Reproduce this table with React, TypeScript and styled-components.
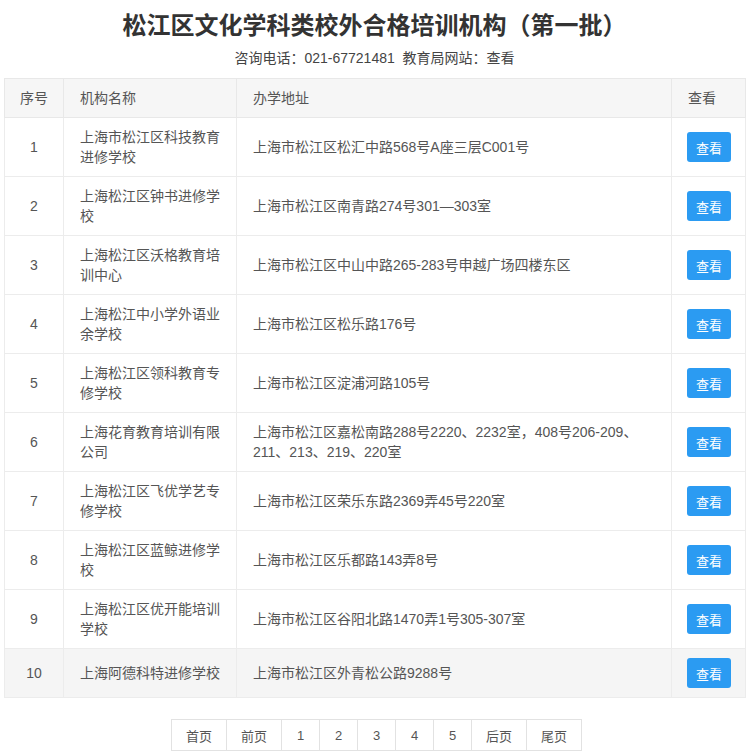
import React from "react";
import styled, { createGlobalStyle } from "styled-components";

const GlobalStyle = createGlobalStyle`
  html, body { margin: 0; padding: 0; background: #fff; }
  body { font-family: "Liberation Sans", "Noto Sans CJK SC", sans-serif; color: #555; }
`;

const Page = styled.div`
  padding: 8px 9px 0 4px;
  display: flex;
  flex-direction: column;
  align-items: stretch;
`;

const Title = styled.h1`
  margin: 0;
  font-size: 24px;
  line-height: 32px;
  font-weight: 700;
  color: #333;
  text-align: center;
  font-family: "Noto Sans CJK SC", sans-serif;
`;

const Subtitle = styled.div`
  margin-top: 8px;
  font-size: 14px;
  line-height: 20px;
  color: #444;
  text-align: center;
`;

const Table = styled.table`
  margin-top: 10px;
  width: 741px;
  table-layout: fixed;
  border-collapse: collapse;
  border: 1px solid #e6e6e6;
  font-size: 14px;
  line-height: 20px;
`;

const HeadCell = styled.th<{ $center?: boolean }>`
  background: #f6f6f6;
  font-weight: 400;
  color: #555;
  text-align: ${(p) => (p.$center ? "center" : "left")};
  padding: ${(p) => (p.$center ? "9px 0" : "9px 15px 9px 16px")};
  border: 1px solid #e8e8e8;
  height: 20px;
  white-space: nowrap;
`;

const Row = styled.tr<{ $shade?: boolean }>`
  background: ${(p) => (p.$shade ? "#f5f5f5" : "#fff")};
`;

const Cell = styled.td<{ $center?: boolean }>`
  text-align: ${(p) => (p.$center ? "center" : "left")};
  vertical-align: middle;
  padding: ${(p) => (p.$center ? "9px 0" : "9px 15px 9px 16px")};
  border: 1px solid #ececec;
  color: #555;
`;

const ViewButton = styled.button`
  width: 44px;
  height: 30px;
  border: none;
  border-radius: 3px;
  background: #2b9bf2;
  color: #fff;
  font-size: 13px;
  font-family: "Noto Sans CJK SC", sans-serif;
  padding: 0;
  margin-left: -1px;
  display: block;
`;

const Pager = styled.div`
  margin-top: 21px;
  align-self: center;
  display: flex;
  border: 1px solid #e2e2e2;
  margin-left: 4px;
`;

const PageItem = styled.div<{ $wide?: boolean }>`
  width: ${(p) => (p.$wide ? "54px" : "37px")};
  height: 30px;
  display: flex;
  align-items: center;
  justify-content: center;
  font-size: 13px;
  color: #555;
  & + & { border-left: 1px solid #e2e2e2; }
`;

const rows: [string, string][] = [
  ["上海市松江区科技教育进修学校", "上海市松江区松汇中路568号A座三层C001号"],
  ["上海松江区钟书进修学校", "上海市松江区南青路274号301—303室"],
  ["上海松江区沃格教育培训中心", "上海市松江区中山中路265-283号申越广场四楼东区"],
  ["上海松江中小学外语业余学校", "上海市松江区松乐路176号"],
  ["上海松江区领科教育专修学校", "上海市松江区淀浦河路105号"],
  ["上海花育教育培训有限公司", "上海市松江区嘉松南路288号2220、2232室，408号206-209、211、213、219、220室"],
  ["上海松江区飞优学艺专修学校", "上海市松江区荣乐东路2369弄45号220室"],
  ["上海松江区蓝鲸进修学校", "上海市松江区乐都路143弄8号"],
  ["上海松江区优开能培训学校", "上海市松江区谷阳北路1470弄1号305-307室"],
  ["上海阿德科特进修学校", "上海市松江区外青松公路9288号"],
];

const pages: [string, boolean][] = [
  ["首页", true],
  ["前页", true],
  ["1", false],
  ["2", false],
  ["3", false],
  ["4", false],
  ["5", false],
  ["后页", true],
  ["尾页", true],
];

export default function App() {
  return (
    <>
      <GlobalStyle />
      <Page>
        <Title>松江区文化学科类校外合格培训机构（第一批）</Title>
        <Subtitle>咨询电话：021-67721481&nbsp;&nbsp;教育局网站：查看</Subtitle>
        <Table>
          <colgroup>
            <col style={{ width: 59 }} />
            <col style={{ width: 173 }} />
            <col style={{ width: 435 }} />
            <col style={{ width: 74 }} />
          </colgroup>
          <thead>
            <tr>
              <HeadCell $center>序号</HeadCell>
              <HeadCell>机构名称</HeadCell>
              <HeadCell>办学地址</HeadCell>
              <HeadCell>查看</HeadCell>
            </tr>
          </thead>
          <tbody>
            {rows.map(([name, addr], i) => (
              <Row key={i} $shade={i === rows.length - 1}>
                <Cell $center>{i + 1}</Cell>
                <Cell>{name}</Cell>
                <Cell>{addr}</Cell>
                <Cell>
                  <ViewButton>查看</ViewButton>
                </Cell>
              </Row>
            ))}
          </tbody>
        </Table>
        <Pager>
          {pages.map(([label, wide]) => (
            <PageItem key={label} $wide={wide}>
              {label}
            </PageItem>
          ))}
        </Pager>
      </Page>
    </>
  );
}
